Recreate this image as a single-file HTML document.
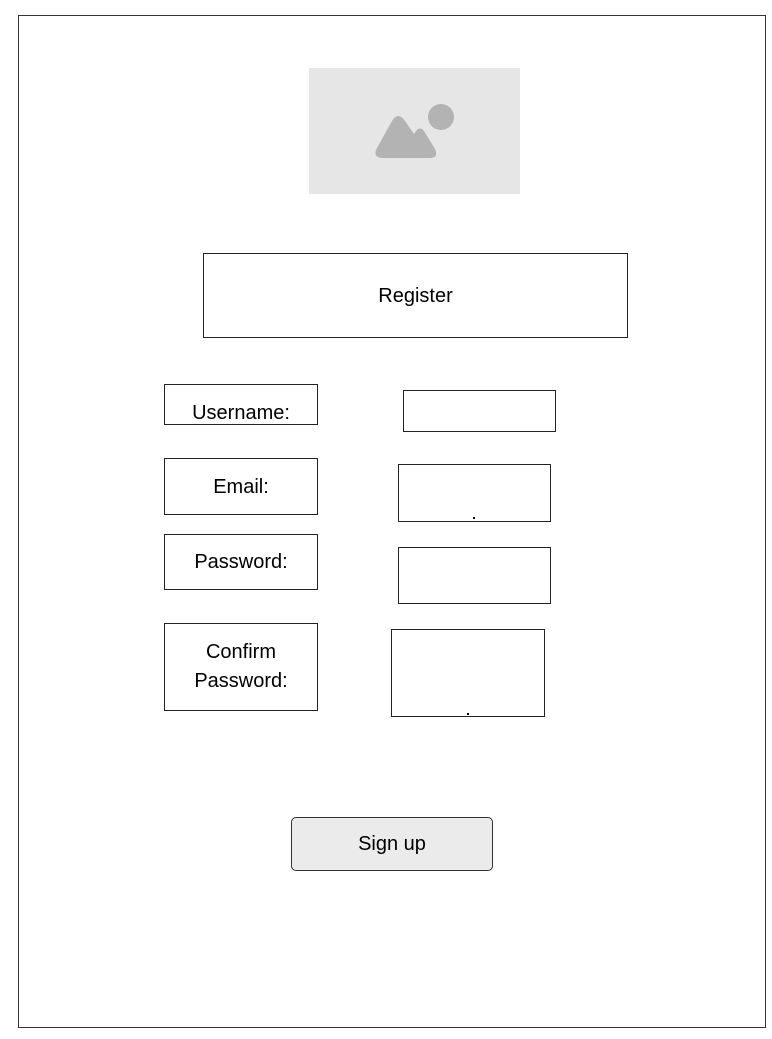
<!DOCTYPE html>
<html><head><style>
body{margin:0;width:772px;height:1039px;background:#fff;position:relative;font-family:"Liberation Sans",Arial,sans-serif;color:#000;overflow:hidden}
.b{position:absolute;box-sizing:border-box;border:1.5px solid #222;background:#fff}
.t{display:flex;align-items:center;justify-content:center;text-align:center;font-size:20px;line-height:24px}
</style></head><body>
<div class="b" style="left:18px;top:15px;width:748px;height:1013px;border-color:#333"></div>
<div style="position:absolute;left:309px;top:68px;width:211px;height:126px;background:#e6e6e6"></div>
<svg style="position:absolute;left:0;top:0" width="772" height="300">
<circle cx="441" cy="117" r="13" fill="#b3b3b3"/>
<path d="M377 148 L392 121 Q398 111 405 121 L414 134 L416 131 Q420 126 424 131 L435 149 Q439 158 430 158 L383 158 Q372 158 377 148 Z" fill="#b3b3b3"/>
</svg>
<div class="b t" style="left:203px;top:253px;width:425px;height:85px">Register</div>
<div class="b t" style="left:164px;top:384px;width:154px;height:41px;align-items:flex-end;padding-bottom:0;line-height:22px">Username:</div>
<div class="b" style="left:403px;top:390px;width:153px;height:42px"></div>
<div class="b t" style="left:164px;top:458px;width:154px;height:57px">Email:</div>
<div class="b" style="left:398px;top:464px;width:153px;height:58px"></div>
<div style="position:absolute;left:473px;top:517px;width:2px;height:2px;background:#000"></div>
<div class="b t" style="left:164px;top:534px;width:154px;height:56px">Password:</div>
<div class="b" style="left:398px;top:547px;width:153px;height:57px"></div>
<div class="b t" style="left:164px;top:623px;width:154px;height:88px;line-height:29px">Confirm<br>Password:</div>
<div class="b" style="left:391px;top:629px;width:154px;height:88px"></div>
<div style="position:absolute;left:467px;top:713px;width:2px;height:2px;background:#000"></div>
<div class="b t" style="left:291px;top:817px;width:202px;height:54px;background:#ebebeb;border-radius:5px;border-color:#333">Sign up</div>
</body></html>
